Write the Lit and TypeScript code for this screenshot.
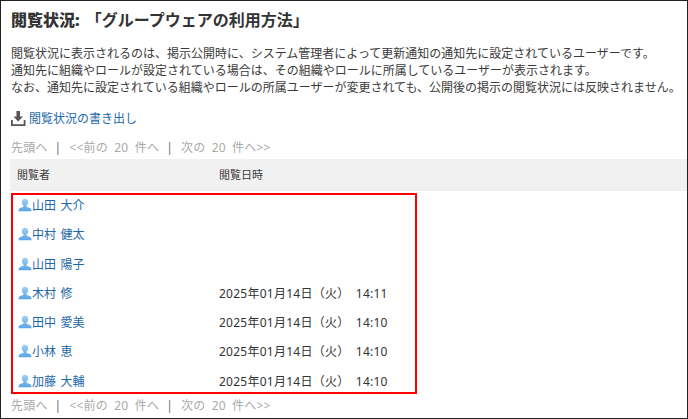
import { LitElement, html, css, svg } from "lit";
import { customElement } from "lit/decorators.js";

const rows: [string, string][] = [
  ["山田 大介", ""],
  ["中村 健太", ""],
  ["山田 陽子", ""],
  ["木村 修", "2025年01月14日\uFF08火\uFF09 14:11"],
  ["田中 愛美", "2025年01月14日\uFF08火\uFF09 14:10"],
  ["小林 恵", "2025年01月14日\uFF08火\uFF09 14:10"],
  ["加藤 大輔", "2025年01月14日\uFF08火\uFF09 14:10"],
];

const userIcon = svg`<svg class="uicon" viewBox="0 0 14 14" width="14" height="14">
  <defs><linearGradient id="ug" x1="0" y1="0" x2="0" y2="1"><stop offset="0" stop-color="#9fd0f5"/><stop offset="1" stop-color="#5aa5e6"/></linearGradient></defs>
  <path d="M7 .8c-2 0-3.100 1.500-3.100 3.400 0 1.500.7 2.800 1.600 3.500v1L1.600 10.300C.9 10.700.6 11.300.6 12v1.200h12.800V12c0-.7-.3-1.300-1-1.700L8.500 8.700V7.700c.9-.7 1.600-2 1.600-3.500C10.100 2.300 9 .8 7 .8z" fill="url(#ug)"/>
</svg>`;

const pager = (last: boolean) => html`<div class="pager ${last ? "bottom" : ""}">
  <span>先頭へ</span><i>|</i><span>&lt;&lt;前の 20 件へ</span><i>|</i><span>次の 20 件へ&gt;&gt;</span>
</div>`;

@customElement("app-root")
export class AppRoot extends LitElement {
  static styles = css`
    :host {
      display: block;
      width: 688px;
      height: 419px;
      box-sizing: border-box;
      border: 1px solid #222;
      padding: 0 0 0 9px;
      background: #fff;
      overflow: hidden;
      color: #3a3a3a;
      font-family: "Noto Sans", "Noto Sans CJK JP", sans-serif;
      font-size: 12px;
    }
    h1 {
      margin: 0;
      padding: 9px 0 0 1px;
      height: 20px;
      line-height: 20px;
      font-size: 16px;
      font-weight: 700;
      color: #333;
    }
    h1 b { margin-right: 2px; }
    .desc {
      margin: 15px 0 0;
      padding-left: 1px;
      line-height: 17px;
      height: 51px;
    }
    .export {
      display: flex;
      align-items: center;
      gap: 3px;
      margin-top: 13px;
      height: 18px;
      color: #1d68a8;
      padding-left: 1px;
    }
    .pager {
      display: flex;
      gap: 7px;
      margin-top: 12px;
      height: 18px;
      line-height: 18px;
      color: #aaa;
      padding-left: 1px;
      word-spacing: 3px;
      letter-spacing: 0.2px;
    }
    .pager.bottom { margin-top: 3px; }
    .pager i {
      font-style: normal;
      color: #5c7086;
      margin-right: 1px;
    }
    .head {
      display: flex;
      align-items: center;
      box-sizing: border-box;
      height: 32px;
      padding: 0 0 3px 7px;
      margin-top: 2px;
      background: #f1f1f1;
      font-size: 11px;
    }
    .c1 { width: 202px; flex: none; }
    .box {
      width: 406px;
      height: 201px;
      box-sizing: border-box;
      border: 2px solid #f00;
      margin: 2px 0 0 1px;
      padding: 1px 0 0 5px;
      display: flex;
      flex-direction: column;
      gap: 11.3px;
    }
    .row {
      display: flex;
      align-items: center;
      height: 18px;
      flex: none;
    }
    .row .c1 {
      width: 201px;
      display: flex;
      align-items: center;
      color: #1d68a8;
      word-spacing: 1.5px;
    }
    .row .d { color: #333; word-spacing: 3px; letter-spacing: 0.25px; }
    .uicon { flex: none; }
  `;

  render() {
    return html`
      <h1><b>閲覧状況: </b>「グループウェアの利用方法」</h1>
      <p class="desc">閲覧状況に表示されるのは、掲示公開時に、システム管理者によって更新通知の通知先に設定されているユーザーです。<br />通知先に組織やロールが設定されている場合は、その組織やロールに所属しているユーザーが表示されます。<br />なお、通知先に設定されている組織やロールの所属ユーザーが変更されても、公開後の掲示の閲覧状況には反映されません。</p>
      <div class="export">
        <svg viewBox="0 0 15 15" width="15" height="15">
          <path d="M5.500 0h3.500v5.500H12L7.200 10.400 2.500 5.500H5.500z" fill="#555"/>
          <path d="M0 9v6h14.500V9h-1.800v4.200H1.800V9z" fill="#555"/>
        </svg>
        <span>閲覧状況の書き出し</span>
      </div>
      ${pager(false)}
      <div class="head"><div class="c1">閲覧者</div><div>閲覧日時</div></div>
      <div class="box">
        ${rows.map(
          ([n, d]) => html`<div class="row">
            <div class="c1">${userIcon}<span>${n}</span></div>
            <div class="d">${d}</div>
          </div>`
        )}
      </div>
      ${pager(true)}
    `;
  }
}
